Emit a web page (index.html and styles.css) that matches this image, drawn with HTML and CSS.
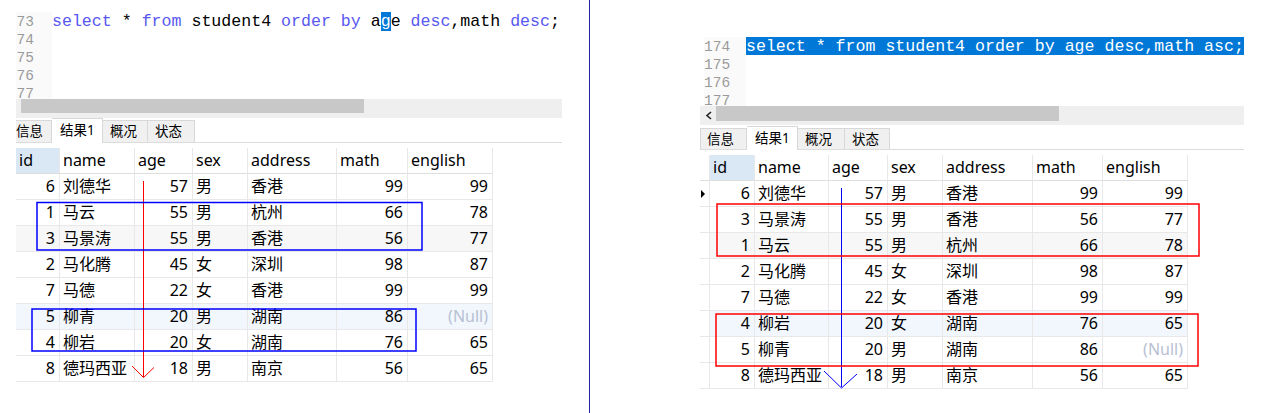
FILE: index.html
```html
<!DOCTYPE html>
<html lang="zh-CN">
<head>
<meta charset="utf-8">
<title>order by 对比</title>
<link rel="stylesheet" href="styles.css">
</head>
<body>
<div class="pane pane--left">
  <div class="win win--left">
    <div class="editor editor--left">
      <div class="gutter gutter--left">
        <div class="ln">73</div><div class="ln">74</div><div class="ln">75</div><div class="ln">76</div><div class="ln">77</div>
      </div>
      <div class="code">
        <div class="line"><span class="kw">select</span> * <span class="kw">from</span> student4 <span class="kw">order</span> <span class="kw">by</span> a<span class="caret">g</span>e <span class="kw">desc</span>,math <span class="kw">desc</span>;</div>
        <div class="line"></div><div class="line"></div><div class="line"></div><div class="line"></div>
      </div>
    </div>
    <div class="hscroll hscroll--left"><div class="thumb thumb--left"></div></div>
    <div class="tabs tabs--left">
      <div class="tab tab--cut">信息</div>
      <div class="tab tab--active">结果1</div>
      <div class="tab tab--w45">概况</div>
      <div class="tab tab--w47">状态</div>
    </div>
    <div class="grid grid--left">
      <div class="row head"><div class="c sel">id</div><div class="c">name</div><div class="c">age</div><div class="c">sex</div><div class="c">address</div><div class="c">math</div><div class="c">english</div></div>
      <div class="row"><div class="c n">6</div><div class="c">刘德华</div><div class="c n">57</div><div class="c">男</div><div class="c">香港</div><div class="c n">99</div><div class="c n">99</div></div>
      <div class="row"><div class="c n">1</div><div class="c">马云</div><div class="c n">55</div><div class="c">男</div><div class="c">杭州</div><div class="c n">66</div><div class="c n">78</div></div>
      <div class="row alt"><div class="c n">3</div><div class="c">马景涛</div><div class="c n">55</div><div class="c">男</div><div class="c">香港</div><div class="c n">56</div><div class="c n">77</div></div>
      <div class="row"><div class="c n">2</div><div class="c">马化腾</div><div class="c n">45</div><div class="c">女</div><div class="c">深圳</div><div class="c n">98</div><div class="c n">87</div></div>
      <div class="row"><div class="c n">7</div><div class="c">马德</div><div class="c n">22</div><div class="c">女</div><div class="c">香港</div><div class="c n">99</div><div class="c n">99</div></div>
      <div class="row hl"><div class="c n">5</div><div class="c">柳青</div><div class="c n">20</div><div class="c">男</div><div class="c">湖南</div><div class="c n">86</div><div class="c n null">(Null)</div></div>
      <div class="row"><div class="c n">4</div><div class="c">柳岩</div><div class="c n">20</div><div class="c">女</div><div class="c">湖南</div><div class="c n">76</div><div class="c n">65</div></div>
      <div class="row"><div class="c n">8</div><div class="c">德玛西亚</div><div class="c n">18</div><div class="c">男</div><div class="c">南京</div><div class="c n">56</div><div class="c n">65</div></div>
    </div>
  </div>
</div>
<div class="pane pane--right">
  <div class="win win--right">
    <div class="editor editor--right">
      <div class="gutter gutter--right">
        <div class="ln">174</div><div class="ln">175</div><div class="ln">176</div><div class="ln">177</div>
      </div>
      <div class="code">
        <div class="line line--sel">select * from student4 order by age desc,math asc;</div>
        <div class="line"></div><div class="line"></div><div class="line"></div>
      </div>
    </div>
    <div class="hscroll hscroll--right">
      <svg class="arrow" width="11" height="19" viewBox="0 0 11 19"><polyline points="7,6 3,9.5 7,13" fill="none" stroke="#222" stroke-width="1.6"/></svg>
      <div class="thumb thumb--right"></div>
    </div>
    <div class="tabs tabs--right">
      <div class="tab tab--first">信息</div>
      <div class="tab tab--active">结果1</div>
      <div class="tab tab--w47">概况</div>
      <div class="tab tab--w45">状态</div>
    </div>
    <div class="grid grid--right">
      <div class="row head"><div class="c rh"></div><div class="c sel">id</div><div class="c">name</div><div class="c">age</div><div class="c">sex</div><div class="c">address</div><div class="c">math</div><div class="c">english</div></div>
      <div class="row"><div class="c rh"><span class="cur"></span></div><div class="c n">6</div><div class="c">刘德华</div><div class="c n">57</div><div class="c">男</div><div class="c">香港</div><div class="c n">99</div><div class="c n">99</div></div>
      <div class="row"><div class="c rh"></div><div class="c n">3</div><div class="c">马景涛</div><div class="c n">55</div><div class="c">男</div><div class="c">香港</div><div class="c n">56</div><div class="c n">77</div></div>
      <div class="row alt"><div class="c rh"></div><div class="c n">1</div><div class="c">马云</div><div class="c n">55</div><div class="c">男</div><div class="c">杭州</div><div class="c n">66</div><div class="c n">78</div></div>
      <div class="row"><div class="c rh"></div><div class="c n">2</div><div class="c">马化腾</div><div class="c n">45</div><div class="c">女</div><div class="c">深圳</div><div class="c n">98</div><div class="c n">87</div></div>
      <div class="row"><div class="c rh"></div><div class="c n">7</div><div class="c">马德</div><div class="c n">22</div><div class="c">女</div><div class="c">香港</div><div class="c n">99</div><div class="c n">99</div></div>
      <div class="row hl"><div class="c rh"></div><div class="c n">4</div><div class="c">柳岩</div><div class="c n">20</div><div class="c">女</div><div class="c">湖南</div><div class="c n">76</div><div class="c n">65</div></div>
      <div class="row"><div class="c rh"></div><div class="c n">5</div><div class="c">柳青</div><div class="c n">20</div><div class="c">男</div><div class="c">湖南</div><div class="c n">86</div><div class="c n null">(Null)</div></div>
      <div class="row"><div class="c rh"></div><div class="c n">8</div><div class="c">德玛西亚</div><div class="c n">18</div><div class="c">男</div><div class="c">南京</div><div class="c n">56</div><div class="c n">65</div></div>
    </div>
  </div>
</div>
<svg class="marks" width="1264" height="413" viewBox="0 0 1264 413">
  <g fill="none" stroke="#ff0000" stroke-width="1">
    <line x1="143.5" y1="181" x2="143.5" y2="377"/>
    <polyline points="132,366 143.5,377.5 154,367.5"/>
  </g>
  <g fill="none" stroke="#0000ff" stroke-width="1.5">
    <rect x="37" y="202.5" width="385" height="47.5"/>
    <rect x="32" y="309" width="384" height="42"/>
  </g>
  <g fill="none" stroke="#0000ff" stroke-width="1">
    <line x1="841.5" y1="188" x2="841.5" y2="387"/>
    <polyline points="824,371 841.5,388 857,374"/>
  </g>
  <g fill="none" stroke="#ff0000" stroke-width="1.5">
    <rect x="717" y="204" width="482" height="52"/>
    <rect x="716" y="314" width="482" height="52"/>
  </g>
</svg>
</body>
</html>
```

FILE: styles.css
```css
html, body {
  margin: 0;
  padding: 0;
  background: #ffffff;
}
body {
  width: 1264px;
  height: 413px;
  overflow: hidden;
  display: flex;
  position: relative;
  font-family: "Noto Sans", "Noto Sans CJK SC", sans-serif;
  color: #000;
}

.pane {
  height: 413px;
  box-sizing: border-box;
}
.pane--left {
  width: 590px;
  padding-left: 16px;
  border-right: 1px solid #2424a0;
}
.pane--right {
  flex: 1;
  padding-left: 110px;
}

.win {
  overflow: hidden;
}
.win--left { width: 546px; }
.win--right { width: 544px; }

/* editor */
.editor {
  display: flex;
  overflow: hidden;
  box-sizing: border-box;
}
.editor--left {
  height: 99px;
  padding-top: 12px;
}
.editor--right {
  height: 106px;
  padding-top: 37px;
  padding-left: 4px;
}
.gutter {
  font-family: "Liberation Mono", monospace;
  font-size: 14.5px;
  color: #9a9a9a;
  text-align: right;
  box-sizing: border-box;
  background: #fafafa;
  flex: none;
}
.ln {
  box-sizing: border-box;
  height: 18px;
  padding-top: 3px;
  line-height: 15px;
}
.gutter--left { width: 36px; padding-right: 18px; }
.gutter--right { width: 42px; padding-right: 17px; }
.code {
  flex: 1;
  font-family: "Liberation Mono", "Courier New", monospace;
  font-size: 16.6px;
  color: #000;
}
.line {
  box-sizing: border-box;
  height: 18px;
  padding-top: 2px;
  line-height: 16px;
  white-space: pre;
}
.kw { color: #5858f0; }
.caret { background: #0078d7; color: #fff; }
.line--sel { background: #0078d7; color: #fff; }

/* scrollbar */
.hscroll {
  background: #efefef;
  height: 19px;
  display: flex;
  align-items: flex-start;
}
.arrow { margin-left: 4px; flex: none; }
.thumb { background: #c8c8c8; }
.thumb--left { margin-left: 5px; width: 343px; height: 14px; }
.thumb--right { margin-left: 1px; width: 343px; height: 15px; }

/* tabs */
.tabs {
  display: flex;
  align-items: flex-end;
  border-bottom: 1px solid #dcdcdc;
  font-size: 13.5px;
}
.tabs--left { height: 24px; }
.tabs--right { height: 23px; margin-top: 1px; }
.tab {
  box-sizing: border-box;
  height: calc(100% - 2px);
  border: 1px solid #d8d8d8;
  border-bottom: 0;
  border-left: 0;
  background: #f0f0f0;
  padding-left: 7px;
  line-height: 21px;
  white-space: nowrap;
  overflow: hidden;
  flex: none;
}
.tab--cut { width: 43px; margin-left: -7px; }
.tab--first { width: 47px; padding-left: 6px; border-left: 1px solid #d8d8d8; }
.tab--active {
  width: 51px;
  height: calc(100% + 1px);
  margin-bottom: -1px;
  background: #fff;
  padding-left: 8px;
  line-height: 23px;
}
.tab--w45 { width: 45px; }
.tab--w47 { width: 47px; }

/* grid */
.grid {
  margin-top: 5px;
  font-size: 16px;
}
.grid--left { --cols: 44px 75px 58px 55px 89px 71px 85px; }
.grid--right { --cols: 10px 45px 74px 59px 55px 90px 70px 85px; }
.row {
  display: grid;
  grid-template-columns: var(--cols);
  height: 26px;
  width: max-content;
}
.c {
  box-sizing: border-box;
  height: 26px;
  border-right: 1px solid #e8e8e8;
  border-bottom: 1px solid #e8e8e8;
  padding: 0 4px 0 3px;
  line-height: 25px;
  white-space: nowrap;
  overflow: hidden;
}
.head .c { border-bottom-color: #dedede; }
.head .sel { background: #dae8f5; }
.n { text-align: right; }
.null { color: #b7c0d2; }
.alt .c { background: #f7f7f7; }
.hl .c { background: #f2f7fd; }
.alt .rh, .hl .rh, .head .rh { background: #fff; }
.rh {
  padding: 0;
  position: relative;
}
.cur {
  position: absolute;
  left: 1px;
  top: 9px;
  width: 0;
  height: 0;
  border-left: 4px solid #000;
  border-top: 4px solid transparent;
  border-bottom: 4px solid transparent;
}

/* annotation overlay */
.marks {
  position: absolute;
  left: 0;
  top: 0;
  pointer-events: none;
}
```
